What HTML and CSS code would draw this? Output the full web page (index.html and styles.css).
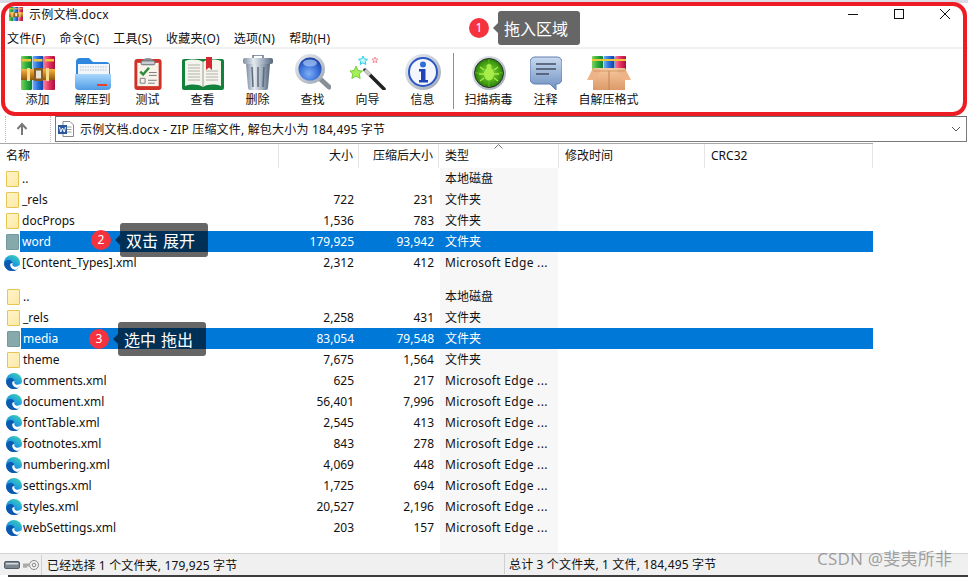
FILE: index.html
```html
<!DOCTYPE html>
<html lang="zh">
<head>
<meta charset="utf-8">
<title>示例文档.docx</title>
<link rel="stylesheet" href="styles.css">
</head>
<body>
<svg class="defs" width="0" height="0" aria-hidden="true">
  <defs>
    <linearGradient id="gGreen" x1="0" x2="1" y1="0" y2="0"><stop offset="0" stop-color="#7fd35a"/><stop offset=".5" stop-color="#2fae3e"/><stop offset="1" stop-color="#0f7d34"/></linearGradient>
    <linearGradient id="gBlue" x1="0" x2="1" y1="0" y2="0"><stop offset="0" stop-color="#6fb2f5"/><stop offset=".5" stop-color="#2a70dc"/><stop offset="1" stop-color="#123f9e"/></linearGradient>
    <linearGradient id="gRed" x1="0" x2="1" y1="0" y2="0"><stop offset="0" stop-color="#f77a9a"/><stop offset=".5" stop-color="#e22f62"/><stop offset="1" stop-color="#a80f3a"/></linearGradient>
    <linearGradient id="gGold" x1="0" x2="0" y1="0" y2="1"><stop offset="0" stop-color="#f4b949"/><stop offset=".5" stop-color="#c98523"/><stop offset="1" stop-color="#8e5a12"/></linearGradient>
    <linearGradient id="gFold" x1="0" x2="0" y1="0" y2="1"><stop offset="0" stop-color="#a9d8fb"/><stop offset="1" stop-color="#4f9be6"/></linearGradient>
    <linearGradient id="gCan" x1="0" x2="1" y1="0" y2="0"><stop offset="0" stop-color="#7f8fa3"/><stop offset=".35" stop-color="#e4e9ef"/><stop offset=".7" stop-color="#9aa8b8"/><stop offset="1" stop-color="#56657a"/></linearGradient>
    <radialGradient id="gLens" cx=".45" cy=".7" r=".7"><stop offset="0" stop-color="#7fb0f5"/><stop offset=".6" stop-color="#3a6fd8"/><stop offset="1" stop-color="#173c9c"/></radialGradient>
    <linearGradient id="gRing" x1="0" x2="1" y1="0" y2="1"><stop offset="0" stop-color="#eef1f5"/><stop offset="1" stop-color="#9aa4b2"/></linearGradient>
    <radialGradient id="gVirus" cx=".5" cy=".5" r=".55"><stop offset="0" stop-color="#8fe03a"/><stop offset=".7" stop-color="#3f9c12"/><stop offset="1" stop-color="#1f6608"/></radialGradient>
    <linearGradient id="gBubble" x1="0" x2="0" y1="0" y2="1"><stop offset="0" stop-color="#c9d9ef"/><stop offset="1" stop-color="#6d8fc2"/></linearGradient>
    <linearGradient id="gBox" x1="0" x2="0" y1="0" y2="1"><stop offset="0" stop-color="#f6c9a0"/><stop offset="1" stop-color="#dd9a68"/></linearGradient>
    <linearGradient id="gEdge" x1=".8" x2=".2" y1="0" y2="1"><stop offset="0" stop-color="#3fd0b4"/><stop offset=".5" stop-color="#1c9be0"/><stop offset="1" stop-color="#0b58b4"/></linearGradient>

    <symbol id="i-rar" viewBox="0 0 34 34">
      <rect x="0" y="0" width="11" height="34" rx="1" fill="url(#gGreen)"/>
      <rect x="11.500" y="0" width="11" height="34" rx="1" fill="url(#gBlue)"/>
      <rect x="23" y="0" width="11" height="34" rx="1" fill="url(#gRed)"/>
      <path d="M1 3h9v2.500h-9zM12.500 3h9v2.500h-9zM24 3h9v2.500h-9z" fill="#f2c536"/>
      <rect x="0" y="13" width="34" height="11" fill="url(#gGold)"/>
      <rect x="6" y="12" width="3" height="13" fill="#f9dc8a"/>
      <rect x="25" y="12" width="3" height="13" fill="#f9dc8a"/>
      <rect x="13" y="12" width="9" height="13" rx="1" fill="#8a5a1a"/>
      <rect x="15" y="14.500" width="5" height="8" fill="#e9e3d3"/>
    </symbol>

    <symbol id="i-folder" viewBox="0 0 36 34">
      <path d="M1 6a4 4 0 0 1 4-4h9l4 4h13a4 4 0 0 1 4 4v10H1z" fill="#2f86de"/>
      <rect x="3" y="8" width="31" height="13" fill="#f2f5f9"/>
      <path d="M5 11h27M5 14h27" stroke="#b7c4d3" stroke-width="1" stroke-dasharray="1.500 1"/>
      <path d="M0 18h36v12a4 4 0 0 1-4 4H4a4 4 0 0 1-4-4z" fill="url(#gFold)"/>
      <rect x="22" y="28" width="10" height="2" fill="#e5432d"/>
    </symbol>

    <symbol id="i-test" viewBox="0 0 28 34">
      <rect x="0" y="2" width="28" height="32" rx="3" fill="#cf3328"/>
      <rect x="3" y="6" width="22" height="24" fill="#f7f3ea"/>
      <path d="M8 5a6 4 0 0 1 12 0v3H8z" fill="#8b8f94"/>
      <rect x="7" y="4" width="14" height="4" rx="1" fill="#c9ccd0" stroke="#6c7075"/>
      <path d="M6 15l3 3 6-7" fill="none" stroke="#2f8d3a" stroke-width="2.500"/>
      <path d="M15 16h8M15 19h8M6 22h5v5H6z" fill="none" stroke="#7d7d7d"/>
      <path d="M14 24h9M14 27h7" stroke="#7d7d7d"/>
    </symbol>

    <symbol id="i-book" viewBox="0 0 42 33">
      <rect x="0" y="2" width="42" height="31" rx="2" fill="#12813b"/>
      <path d="M3 4c6-2 13-2 18 1 5-3 12-3 18-1v25c-6-2-13-2-18 1-5-3-12-3-18-1z" fill="#f5f5ee"/>
      <path d="M21 5v25" stroke="#9b9b90"/>
      <path d="M6 8h12M6 11h12M6 14h12M6 17h12M6 20h12M6 23h12M24 14h12M24 17h12M24 20h12M24 23h12" stroke="#b2b2aa"/>
      <path d="M24 0h6v13l-3-2.500-3 2.500z" fill="#d8262f"/>
    </symbol>

    <symbol id="i-trash" viewBox="0 0 30 35">
      <rect x="10" y="0" width="10" height="4" rx="1" fill="none" stroke="#66748a" stroke-width="1.500"/>
      <rect x="0" y="3" width="30" height="6" rx="2" fill="url(#gCan)"/>
      <path d="M3 9h24l-2 24a2 2 0 0 1-2 2H7a2 2 0 0 1-2-2z" fill="url(#gCan)"/>
      <path d="M9 12l1 20M15 12v20M21 12l-1 20" stroke="#5c6b80" stroke-width="1.500"/>
    </symbol>

    <symbol id="i-search" viewBox="0 0 36 36">
      <path d="M22 22l12 11" stroke="#8a8f97" stroke-width="5" stroke-linecap="round"/>
      <circle cx="15" cy="15" r="15" fill="url(#gRing)"/>
      <circle cx="15" cy="15" r="11.500" fill="url(#gLens)"/>
      <ellipse cx="15" cy="9" rx="7" ry="3.500" fill="#a9c8f5" opacity=".7"/>
    </symbol>

    <symbol id="i-wand" viewBox="0 0 36 34">
      <path d="M15 14l19 19" stroke="#222" stroke-width="3.500" stroke-linecap="round"/>
      <path d="M15 14l5 5" stroke="#c9c9c9" stroke-width="3.500"/>
      <path d="M6 10l2 4.500 4.500.500-3.300 3 1 4.500-4.200-2.400-4.200 2.400 1-4.500L-.300 15l4.500-.500z" fill="#a5ef5a" stroke="#5fc41e" stroke-width=".8"/>
      <path d="M13 0l1.400 3 3.100.300-2.300 2.100.7 3.100-2.900-1.700-2.900 1.700.7-3.100-2.300-2.100 3.100-.300z" fill="#c5f6fb" stroke="#28cde0"/>
      <path d="M25 1l.9 2 2.100.200-1.600 1.400.5 2.100-1.900-1.100-1.900 1.100.5-2.100-1.600-1.400 2.100-.200z" fill="#fde2e6" stroke="#ef7c8c" stroke-width=".8"/>
    </symbol>

    <symbol id="i-info" viewBox="0 0 36 36">
      <circle cx="18" cy="18" r="18" fill="url(#gRing)"/>
      <circle cx="18" cy="18" r="14" fill="#f4f6fb" stroke="#2a56c6" stroke-width="2"/>
      <circle cx="18" cy="10.500" r="3" fill="#2f6fdc"/>
      <path d="M14 15h6.500v11H23v2.500h-9V26h2v-8.500h-2z" fill="#1f44b8"/>
    </symbol>

    <symbol id="i-virus" viewBox="0 0 34 34">
      <circle cx="17" cy="17" r="17" fill="url(#gRing)"/>
      <circle cx="17" cy="17" r="14.500" fill="url(#gVirus)" stroke="#333"/>
      <path d="M17 3v6M17 25v6M3 17h6M25 17h6" stroke="#63b81f"/>
      <ellipse cx="17" cy="18" rx="5" ry="6.500" fill="#a8ec4a"/>
      <circle cx="17" cy="10.500" r="2.500" fill="#a8ec4a"/>
      <path d="M12 14l-4-3M22 14l4-3M12 18H7M22 18h5M12 22l-4 3M22 22l4 3" stroke="#a8ec4a" stroke-width="1.300"/>
    </symbol>

    <symbol id="i-note" viewBox="0 0 32 34">
      <path d="M5 1h22a5 5 0 0 1 5 5v17a5 5 0 0 1-5 5h-1v6l-6-6H5a5 5 0 0 1-5-5V6a5 5 0 0 1 5-5z" fill="url(#gBubble)" stroke="#5f7fb0"/>
      <path d="M6 8h20M6 13h20M6 18h13" stroke="#444d5e" stroke-width="1.600"/>
    </symbol>

    <symbol id="i-sfx" viewBox="0 0 44 34">
      <rect x="5" y="0" width="11" height="16" rx="1" fill="url(#gGreen)"/>
      <rect x="16.500" y="0" width="11" height="16" rx="1" fill="url(#gBlue)"/>
      <rect x="28" y="0" width="11" height="16" rx="1" fill="url(#gRed)"/>
      <path d="M5 3h34v2H5z" fill="#f2c536"/>
      <path d="M6 12h32v22H6z" fill="url(#gBox)"/>
      <path d="M6 12L0 24h8l6-10zM38 12l6 12h-8l-6-10z" fill="#eeb387"/>
      <path d="M22 15v19" stroke="#c28352"/>
      <path d="M6 15h32" stroke="#c28352" opacity=".6"/>
    </symbol>

    <symbol id="i-edge" viewBox="0 0 16 16">
      <circle cx="8" cy="8" r="8" fill="url(#gEdge)"/>
      <path d="M.2 8.800C1 5 4.500 4.500 6.500 5.500 8.500 6.500 8 8 8 9c0 3 2 5.500 4.500 5.900C11.200 15.600 9.700 16 8 16 3.600 16 .2 12.800.2 8.800z" fill="#0c5ab0"/>
      <path d="M6.200 9.500C6.200 13 9 15 12 14.700 14 13.700 15.400 12 15.900 9.800 14 12 10 12.500 8.700 10.500 8.200 9.800 8.200 9 8.600 8.300 7.200 7.800 6.200 8.500 6.200 9.500z" fill="#fff"/>
    </symbol>
  </defs>
</svg>

<div class="window">
  <header class="titlebar">
    <svg class="title-ico"><use href="#i-rar"/></svg>
    <span class="title-text">示例文档.docx</span>
    <div class="winbtns">
      <svg class="winbtn" viewBox="0 0 46 20"><path d="M18 10.500h10" stroke="#111"/></svg>
      <svg class="winbtn" viewBox="0 0 46 20"><rect x="18.500" y="5.500" width="9" height="9" fill="none" stroke="#111"/></svg>
      <svg class="winbtn" viewBox="0 0 46 20"><path d="M18 5l10 10M28 5L18 15" stroke="#111"/></svg>
    </div>
  </header>
  <nav class="menubar">
    <span>文件(F)</span><span>命令(C)</span><span>工具(S)</span><span>收藏夹(O)</span><span>选项(N)</span><span>帮助(H)</span>
  </nav>
  <div class="toolbar">
    <div class="tool"><svg class="ic ic-rar"><use href="#i-rar"/></svg><span>添加</span></div>
    <div class="tool"><svg class="ic ic-folder"><use href="#i-folder"/></svg><span>解压到</span></div>
    <div class="tool"><svg class="ic ic-test"><use href="#i-test"/></svg><span>测试</span></div>
    <div class="tool"><svg class="ic ic-book"><use href="#i-book"/></svg><span>查看</span></div>
    <div class="tool"><svg class="ic ic-trash"><use href="#i-trash"/></svg><span>删除</span></div>
    <div class="tool"><svg class="ic ic-search"><use href="#i-search"/></svg><span>查找</span></div>
    <div class="tool"><svg class="ic ic-wand"><use href="#i-wand"/></svg><span>向导</span></div>
    <div class="tool"><svg class="ic ic-info"><use href="#i-info"/></svg><span>信息</span></div>
    <div class="sep"></div>
    <div class="tool tool-virus"><svg class="ic ic-virus"><use href="#i-virus"/></svg><span>扫描病毒</span></div>
    <div class="tool tool-note"><svg class="ic ic-note"><use href="#i-note"/></svg><span>注释</span></div>
    <div class="tool tool-sfx"><svg class="ic ic-sfx"><use href="#i-sfx"/></svg><span>自解压格式</span></div>
  </div>
  <div class="addressbar">
    <div class="upbtn">
      <svg width="12" height="14" viewBox="0 0 12 14"><path d="M6 13V3M1.500 7L6 2l4.500 5" fill="none" stroke="#777" stroke-width="2"/></svg>
    </div>
    <div class="pathbox">
      <svg class="word" width="16" height="16" viewBox="0 0 16 16"><path d="M5 .5h7l3.500 3.500v11.500H5z" fill="#fff" stroke="#8a8a8a"/><path d="M7.500 6h6M7.500 8.500h6M7.500 11h6" stroke="#9a9a9a"/><rect x="0" y="4" width="9" height="9" fill="#2b579a"/><path d="M1.500 6l1.200 5L4.500 7l1.800 4 1.200-5" fill="none" stroke="#fff"/></svg>
      <span class="pathtext">示例文档.docx - ZIP 压缩文件, 解包大小为 184,495 字节</span>
      <svg class="chev" width="10" height="6" viewBox="0 0 10 6"><path d="M1 1l4 4 4-4" fill="none" stroke="#555"/></svg>
    </div>
  </div>
  <div class="colhead">
    <div class="hc hc-name">名称</div>
    <div class="hc hc-size">大小</div>
    <div class="hc hc-pack">压缩后大小</div>
    <div class="hc hc-type">类型<svg class="sort" width="9" height="5" viewBox="0 0 9 5"><path d="M.5 4.500l4-4 4 4" fill="none" stroke="#777"/></svg></div>
    <div class="hc hc-time">修改时间</div>
    <div class="hc hc-crc">CRC32</div>
  </div>
  <main class="lists">
    <section class="list">
      <div class="row"><i class="fold"></i><div class="band"><span>..</span><span></span><span></span><span>本地磁盘</span></div></div>
      <div class="row"><i class="fold"></i><div class="band"><span>_rels</span><span>722</span><span>231</span><span>文件夹</span></div></div>
      <div class="row"><i class="fold"></i><div class="band"><span>docProps</span><span>1,536</span><span>783</span><span>文件夹</span></div></div>
      <div class="row sel"><i class="fold"></i><div class="band"><span>word</span><span>179,925</span><span>93,942</span><span>文件夹</span></div></div>
      <div class="row"><svg class="edge"><use href="#i-edge"/></svg><div class="band"><span>[Content_Types].xml</span><span>2,312</span><span>412</span><span class="ms">Microsoft Edge ...</span></div></div>
    </section>
    <section class="list list-b">
      <div class="row"><i class="fold"></i><div class="band"><span>..</span><span></span><span></span><span>本地磁盘</span></div></div>
      <div class="row"><i class="fold"></i><div class="band"><span>_rels</span><span>2,258</span><span>431</span><span>文件夹</span></div></div>
      <div class="row sel"><i class="fold"></i><div class="band"><span>media</span><span>83,054</span><span>79,548</span><span>文件夹</span></div></div>
      <div class="row"><i class="fold"></i><div class="band"><span>theme</span><span>7,675</span><span>1,564</span><span>文件夹</span></div></div>
      <div class="row"><svg class="edge"><use href="#i-edge"/></svg><div class="band"><span>comments.xml</span><span>625</span><span>217</span><span class="ms">Microsoft Edge ...</span></div></div>
      <div class="row"><svg class="edge"><use href="#i-edge"/></svg><div class="band"><span>document.xml</span><span>56,401</span><span>7,996</span><span class="ms">Microsoft Edge ...</span></div></div>
      <div class="row"><svg class="edge"><use href="#i-edge"/></svg><div class="band"><span>fontTable.xml</span><span>2,545</span><span>413</span><span class="ms">Microsoft Edge ...</span></div></div>
      <div class="row"><svg class="edge"><use href="#i-edge"/></svg><div class="band"><span>footnotes.xml</span><span>843</span><span>278</span><span class="ms">Microsoft Edge ...</span></div></div>
      <div class="row"><svg class="edge"><use href="#i-edge"/></svg><div class="band"><span>numbering.xml</span><span>4,069</span><span>448</span><span class="ms">Microsoft Edge ...</span></div></div>
      <div class="row"><svg class="edge"><use href="#i-edge"/></svg><div class="band"><span>settings.xml</span><span>1,725</span><span>694</span><span class="ms">Microsoft Edge ...</span></div></div>
      <div class="row"><svg class="edge"><use href="#i-edge"/></svg><div class="band"><span>styles.xml</span><span>20,527</span><span>2,196</span><span class="ms">Microsoft Edge ...</span></div></div>
      <div class="row"><svg class="edge"><use href="#i-edge"/></svg><div class="band"><span>webSettings.xml</span><span>203</span><span>157</span><span class="ms">Microsoft Edge ...</span></div></div>
    </section>
  </main>
  <footer class="statusbar">
    <div class="st-left">
      <svg class="st-ico" width="36" height="12" viewBox="0 0 36 12"><rect x=".5" y="2.500" width="15" height="7" rx="1.500" fill="#7c868e" stroke="#555f67"/><rect x="2" y="4" width="12" height="1.500" fill="#d5dade"/><circle cx="30" cy="6" r="4.500" fill="#f2f2f2" stroke="#888"/><circle cx="30" cy="6" r="1.800" fill="none" stroke="#888"/><rect x="19" y="4.500" width="7" height="3" fill="#aaa"/><path d="M19 8h4" stroke="#888"/></svg>
      <span class="st-text">已经选择 1 个文件夹, 179,925 字节</span>
    </div>
    <div class="st-right">总计 3 个文件夹, 1 文件, 184,495 字节</div>
  </footer>
  <div class="edgeline"></div>
</div>

<div class="frame"></div>

<div class="note n1"><b>1</b><em>拖入区域</em></div>
<div class="note n2"><b>2</b><em class="spaced">双击 展开</em></div>
<div class="note n3"><b>3</b><em class="spaced">选中 拖出</em></div>
<div class="watermark">CSDN @斐夷所非</div>
</body>
</html>
```

FILE: styles.css
```css
* { box-sizing: border-box; }
html, body { margin: 0; padding: 0; }
body {
  position: relative;
  width: 968px;
  height: 577px;
  overflow: hidden;
  background: #fff;
  color: #111;
  font: 12px/21px "Noto Sans", "Noto Sans CJK SC", sans-serif;
}
.defs { position: absolute; }
.window { display: flex; flex-direction: column; height: 577px; border-top: 3px solid #dcdce6; }

.titlebar { display: flex; align-items: center; height: 21px; padding: 1px 0 0 8px; }
.title-ico { width: 16px; height: 14px; margin-right: 5px; }
.title-text { flex: 1; letter-spacing: .2px; }
.winbtns { display: flex; width: 138px; }
.winbtn { width: 46px; height: 20px; }

.menubar { display: flex; gap: 14px; height: 25px; padding: 4px 0 0 7px; border-bottom: 2px solid #f1f1f1; letter-spacing: .2px; }

.toolbar { display: flex; height: 66px; padding: 5px 0 0 10px; }
.tool { display: flex; flex-direction: column; align-items: center; justify-content: flex-end; width: 55px; height: 55px; }
.tool span { line-height: 19px; }
.ic { display: block; }
.ic-rar { width: 34px; height: 34px; }
.ic-folder { width: 36px; height: 34px; }
.ic-test { width: 28px; height: 33px; }
.ic-book { width: 42px; height: 33px; }
.ic-trash { width: 30px; height: 35px; }
.ic-search { width: 36px; height: 36px; }
.ic-wand { width: 36px; height: 34px; }
.ic-info { width: 36px; height: 36px; }
.ic-virus { width: 34px; height: 34px; }
.ic-note { width: 32px; height: 34px; }
.ic-sfx { width: 44px; height: 34px; }
.sep { width: 1px; height: 56px; margin: -1px 7px 0 2.500px; background: #8e8e8e; }
.tool-virus { width: 56px; }
.tool-note { width: 58px; }
.tool-sfx { width: 68px; }

.addressbar { display: flex; height: 28px; padding: 1px 1px 0 5px; }
.upbtn { display: flex; align-items: center; justify-content: center; width: 46px; height: 26px; margin-right: 4px; padding-right: 13px; border-left: 1px dotted #bbb; border-right: 1px dotted #bbb; }
.pathbox { display: flex; flex: 1; align-items: center; height: 26px; padding: 0 3px 0 2px; border: 1px solid #7b7b7b; border-top-color: #6d6d6d; }
.word { margin-right: 6px; }
.pathtext { flex: 1; letter-spacing: .18px; }
.chev { margin-right: 2px; }

.colhead { display: grid; grid-template-columns: 279px 80px 80px 120px 146px 168px; height: 25px; width: 873px; border-top: 1px solid #a8a8a8; }
.hc { position: relative; height: 24px; padding: 0 5px 0 6px; line-height: 23px; border-right: 1px solid #e5e5e5; }
.hc-size, .hc-pack { text-align: right; }
.sort { position: absolute; left: 55px; top: 0; }

.lists {
  flex: 1;
  background: linear-gradient(to right, transparent 440px, #f7f7f7 440px, #f7f7f7 558px, transparent 558px);
}
.list-b { margin-top: 13px; }
.row { display: flex; align-items: center; width: 873px; height: 21px; }
.fold {
  display: block;
  width: 13px;
  height: 16px;
  margin: 0 1px 0 6px;
  background: linear-gradient(135deg, #fff4c8, #fde9a6);
  border: 1px solid #e6c552;
  border-radius: 1px;
}
.edge { width: 16px; height: 16px; margin: 0 0 0 4px; flex: none; }
.band { display: grid; grid-template-columns: 258px 80px 80px 1fr; flex: 1; height: 21px; }
.band span { white-space: nowrap; padding-left: 2px; }
.band span:nth-child(2), .band span:nth-child(3) { text-align: right; padding: 0 4px 0 0; }
.band span:nth-child(4) { padding-left: 7px; }
.band .ms { letter-spacing: .3px; }
.sel .band { background: #0078d7; color: #fff; }
.sel .fold { background: #86a9ab; border-color: #74999c; }
.list-b .fold { margin-left: 7px; }
.list-b .edge { margin-left: 6px; margin-right: -1px; }
.list-b .band { grid-template-columns: 257px 80px 80px 1fr; }

.statusbar { display: flex; height: 22px; background: #f0f0f0; border-top: 1px solid #d3d3d3; letter-spacing: .15px; }
.st-left { display: flex; align-items: center; width: 504px; padding-left: 4px; }
.st-ico { margin-right: 1px; }
.st-text { height: 20px; padding-left: 5px; border-left: 1px solid #d0d0d0; }
.st-right { height: 20px; padding-left: 4px; border-left: 1px solid #d0d0d0; }
.edgeline { height: 2px; margin-left: 8px; background: #3d3d3d; }

.frame {
  position: absolute;
  left: 1px;
  top: 2px;
  width: 966px;
  height: 114px;
  border: 4.500px solid #ed1c24;
  border-radius: 14px;
  pointer-events: none;
}

.note { position: absolute; display: flex; align-items: center; height: 34px; }
.note b {
  display: block;
  width: 20px;
  height: 20px;
  margin-right: 9px;
  border-radius: 50%;
  background: #f5333f;
  color: #fff;
  font: 12px/20px "Noto Sans", sans-serif;
  text-align: center;
}
.note em {
  position: relative;
  display: block;
  height: 34px;
  padding: 0 12px 0 6px;
  border-radius: 3px;
  background: rgba(0, 0, 0, .6);
  color: #fff;
  font: normal 16px/34px "Noto Sans CJK SC", sans-serif;
  white-space: nowrap;
}
.note .spaced { padding-right: 13px; word-spacing: 1.500px; }
.note em::before {
  content: "";
  position: absolute;
  left: -5px;
  top: 12px;
  border-style: solid;
  border-width: 5px 5px 5px 0;
  border-color: transparent rgba(0, 0, 0, .6) transparent transparent;
}
.n1 { left: 469px; top: 11px; }
.n2 { left: 91px; top: 223px; }
.n3 { left: 89px; top: 322px; }

.watermark {
  position: absolute;
  left: 817px;
  top: 547px;
  color: rgba(90, 90, 90, .55);
  font: 17px/24px "Noto Sans", "Noto Sans CJK SC", sans-serif;
  letter-spacing: .2px;
  white-space: nowrap;
}
```
